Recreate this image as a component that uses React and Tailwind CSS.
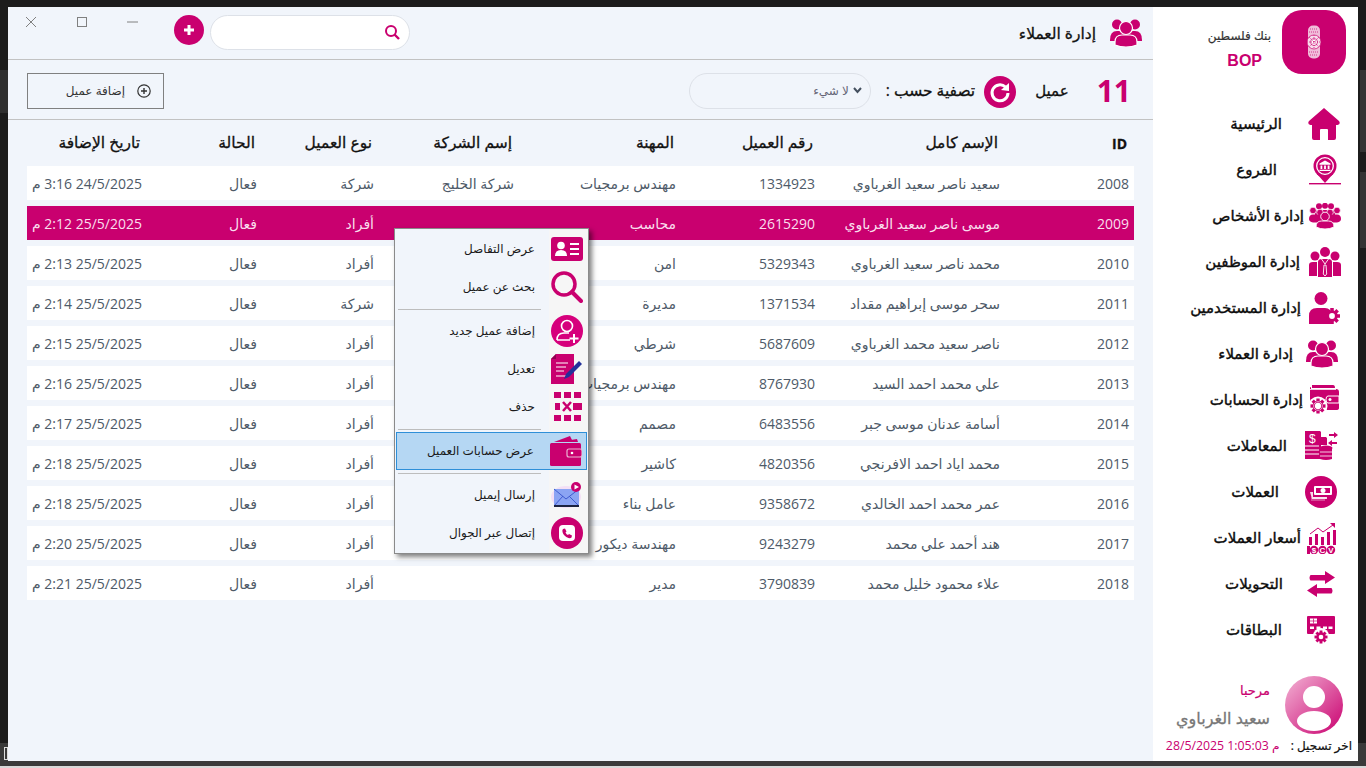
import React from "react";

const P = "#c9006f";

const Gear = ({ cx, cy, r, fill = P, hole = "#fff", holeR = 0.36 }) => (
  <g>
    <circle cx={cx} cy={cy} r={r + 1.2} fill="none" stroke="#fff" strokeWidth="2.4" />
    <circle cx={cx} cy={cy} r={r * 0.72} fill={fill} />
    {[0, 45, 90, 135].map((a) => (
      <rect key={a} x={cx - r * 0.22} y={cy - r} width={r * 0.44} height={r * 2} fill={fill} transform={`rotate(${a} ${cx} ${cy})`} />
    ))}
    <circle cx={cx} cy={cy} r={r * holeR} fill={hole} />
  </g>
);

const Home = () => (
  <svg width="32" height="32" viewBox="0 0 32 32" fill={P}>
    <path d="M16 0 L31 13 q2 3 -1.500 4 H28 V30 q0 2 -2 2 H20 V22 q0-1 -1-1 h-6 q-1 0 -1 1 V32 H6 q-2 0 -2-2 V17 H2.500 Q-1 16 1 13 Z" />
  </svg>
);
const Branch = () => (
  <svg width="32" height="32" viewBox="0 0 32 32" fill={P}>
    <circle cx="16" cy="12" r="11.500" />
    <path d="M8 20 L16 29 L24 20 Z" />
    <circle cx="16" cy="12" r="8.300" fill="none" stroke="#fff" strokeWidth="1.300" />
    <path d="M16 6.500 L21.500 9.500 V10.700 H10.500 V9.500 Z M11.500 11.500 h1.800 v3.500 h-1.800z M15.100 11.500 h1.800 v3.500 h-1.800z M18.700 11.500 h1.800 v3.500 h-1.800z M10.500 15.700 h11 v1.300 h-11z" fill="#fff" />
    <rect x="0" y="29" width="32" height="1.400" />
  </svg>
);
const Persons = () => (
  <svg width="32" height="26" viewBox="0 0 32 26" fill={P}>
    {[[10, 3.200], [16, 2.800], [22, 3.200]].map(([x, y]) => (
      <circle key={x} cx={x} cy={y} r="3" />
    ))}
    <path d="M6 10 q0-3 4-3 h12 q4 0 4 3 v3 H6z" />
    {[[4, 7.500], [28, 7.500], [11, 9.500], [21, 9.500]].map(([x, y]) => (
      <circle key={x} cx={x} cy={y} r="3.300" stroke="#fff" strokeWidth=".7" />
    ))}
    <path d="M0 16 q0-4.500 4-4.500 h24 q4 0 4 4.500 q0 2.500 -4 3.500 H4 q-4 -1 -4 -3.500z" />
    <circle cx="16" cy="13.500" r="4.300" stroke="#fff" strokeWidth=".9" />
    <path d="M7 24 q0-6 5.500-6 h7 q5.500 0 5.500 6 q-4 2 -9 2 q-5 0 -9 -2z" stroke="#fff" strokeWidth=".9" />
  </svg>
);
const Staff = () => (
  <svg width="32" height="30" viewBox="0 0 32 30" fill={P}>
    <circle cx="6" cy="9" r="4.500" />
    <circle cx="26" cy="9" r="4.500" />
    <circle cx="16" cy="5" r="5" />
    <path d="M0 29 V18 q0-3 4-3 h4 V29 Z M24 15 h4 q4 0 4 3 V29 H24 Z" />
    <path d="M9 30 V15 q0-3 4-3 h6 q4 0 4 3 V30 Z" />
    <path d="M12.500 12 L16 17 L19.500 12 M15 18 h2 l.7 9 l-1.700 2 l-1.700 -2 z" fill="none" stroke="#fff" strokeWidth=".9" />
  </svg>
);
const UserGear = () => (
  <svg width="32" height="32" viewBox="0 0 32 32" fill={P}>
    <circle cx="12" cy="6.500" r="6.500" />
    <path d="M0 32 V24 q0-8 8-8 h8 q3 0 5 2 L22 32 Z" />
    <Gear cx="23" cy="24" r="8" />
  </svg>
);
const Clients = ({ w = 32 }) => (
  <svg width={w} height={(w * 28) / 32} viewBox="0 0 32 28" fill={P}>
    <circle cx="7" cy="5.500" r="5" />
    <circle cx="25" cy="5.500" r="5" />
    <path d="M0 21 q0-9 7-9 h18 q7 0 7 9 v1 H0z" />
    <circle cx="16" cy="9" r="6.500" stroke="#fff" strokeWidth="1.200" />
    <path d="M5 26 V23 q0-7 7-7 h8 q7 0 7 7 v3 q-5 2 -11 2 q-6 0 -11-2z" stroke="#fff" strokeWidth="1.200" />
  </svg>
);
const WalletGear = () => (
  <svg width="30" height="30" viewBox="0 0 30 30" fill={P}>
    <path d="M3 0 H24 q2 0 2 3 H3 z" />
    <path d="M1 3 q0 -1 1 -1 v2 h25 q3 0 3 3 V23 q0 2 -3 2 H1 Z" />
    <path d="M1 4.500 H27" stroke="#fff" strokeWidth=".8" />
    <path d="M19 11 h11 v7 h-11 q-2 0 -2-3.500 q0-3.500 2-3.500z" stroke="#fff" strokeWidth="1" />
    <circle cx="21" cy="14.500" r="1.500" fill="#fff" />
    <circle cx="9" cy="21" r="9.500" fill="#fff" />
    <Gear cx="9" cy="21" r="7.500" holeR={0.42} />
    <circle cx="9" cy="21" r="4.400" fill="none" stroke="#fff" strokeWidth=".6" />
  </svg>
);
const Trans = () => (
  <svg width="33" height="30" viewBox="0 0 33 30" fill={P}>
    <path d="M0 0 H15 L22 7 V14 H16 V28 H0 Z" />
    <path d="M16 0 l6 6 h-6z" fill="#fff" />
    <path d="M0 15 H14 M0 19 H14 M0 23 H14" stroke="#fff" />
    <ellipse cx="21" cy="17" rx="6.500" ry="2.500" />
    <path d="M15 28 V18 h12 v10 q-6 2 -12 0z" fill={P} />
    <path d="M15 21 h12 M15 25 h12" stroke="#fff" strokeWidth=".8" />
    <path d="M24 3 h5 v-2 l4 3 l-4 3 v-2 h-5z M32 11 h-5 v-2 l-4 3 l4 3 v-2 h5z" />
    <text x="4" y="12" fill="#fff" fontSize="12" fontFamily="Liberation Sans, sans-serif">$</text>
  </svg>
);
const Curr = () => (
  <svg width="32" height="32" viewBox="0 0 32 32" fill={P}>
    <circle cx="16" cy="16" r="16" />
    <rect x="9" y="10" width="18" height="9" rx="1" fill="#fff" />
    <rect x="11" y="12" width="14" height="5" fill={P} />
    <circle cx="18" cy="14.500" r="2.500" fill="#fff" />
    <path d="M5 16 h3 v5 h14 v2 H7 z" fill="#fff" opacity=".85" />
    <path d="M6 22 h15 M6 24 h14" stroke="#fff" strokeWidth=".8" opacity=".7" />
  </svg>
);
const Rates = () => (
  <svg width="31" height="31" viewBox="0 0 31 31" fill={P}>
    <path d="M3 11 L11 5 L16 9 L26 2" fill="none" stroke={P} strokeWidth="1" />
    <path d="M23 0 h5 v5z" />
    <rect x="2" y="14" width="3" height="8" />
    <rect x="8" y="11" width="3" height="11" />
    <rect x="14" y="14" width="3" height="8" />
    <rect x="20" y="9" width="3" height="13" />
    <rect x="26" y="7" width="3" height="15" />
    <rect x="0" y="23" width="3" height="8" />
    <circle cx="7" cy="27" r="4.200" />
    <circle cx="15.500" cy="27" r="4.200" />
    <circle cx="24" cy="27" r="4.200" />
    <text x="7" y="30" textAnchor="middle" fill="#fff" fontSize="8" fontWeight="700" fontFamily="Liberation Sans, sans-serif">$</text>
    <text x="15.500" y="30" textAnchor="middle" fill="#fff" fontSize="8" fontWeight="700" fontFamily="Liberation Sans, sans-serif">C</text>
    <text x="24" y="30" textAnchor="middle" fill="#fff" fontSize="8" fontWeight="700" fontFamily="Liberation Sans, sans-serif">V</text>
  </svg>
);
const Transfers = () => (
  <svg width="28" height="26" viewBox="0 0 28 26" fill={P}>
    <path d="M3.500 4 H18 V0 L28 6.500 L18 13 V9.500 H3.500 q-2 -2.750 0 -5.500 Z" />
    <path d="M24.500 17 H10 V13 L0 19.500 L10 26 V22.500 H24.500 q2 -2.750 0 -5.500 Z" />
  </svg>
);
const Cards = () => (
  <svg width="28" height="28" viewBox="0 0 28 28" fill={P}>
    <rect x="0" y="0" width="28" height="18" rx="1" />
    <rect x="3" y="2.500" width="7" height="5" fill="#fff" />
    <path d="M6.500 2.500 v5 M3 5 h7" stroke={P} strokeWidth=".7" />
    {[3, 9.500, 16, 21.500].map((x) => (
      <rect key={x} x={x} y="10.500" width="4" height="2.500" fill="#fff" />
    ))}
    <circle cx="14" cy="20" r="8" fill="#fff" />
    <Gear cx="14" cy="21" r="6.500" />
  </svg>
);

const Logo = () => (
  <svg width="16" height="34" viewBox="0 0 16 34" fill="none" stroke="#c9006f" strokeWidth=".7">
    <rect x="2" y="0.500" width="12" height="33" rx="5" fill="#f0bcd9" stroke="none" />
    <path d="M4 4 h8 M3 7 h10 M3 27 h10 M4 30 h8" strokeDasharray="1 1" />
    <circle cx="8" cy="17" r="7" fill="#f8dcec" />
    <circle cx="8" cy="17" r="3.500" fill="#fff" />
    <path d="M8 10 v14 M1 17 h14 M3 12 l10 10 M13 12 l-10 10" strokeDasharray="1 1" />
  </svg>
);

const NAV = [
  ["الرئيسية", Home, "ml-[4px]", "mr-[22px]"],
  ["الفروع", Branch, "ml-[5px]", "mr-[27px]"],
  ["إدارة الأشخاص", Persons, "ml-[5px]", "mr-[0px]"],
  ["إدارة الموظفين", Staff, "ml-[5px]", "mr-[4px]"],
  ["إدارة المستخدمين", UserGear, "ml-[5px]", "mr-[3px]"],
  ["إدارة العملاء", Clients, "ml-[2px]", "mr-[11px]"],
  ["إدارة الحسابات", WalletGear, "ml-[5px]", "mr-[1px]"],
  ["المعاملات", Trans, "ml-[1px]", "mr-[17px]"],
  ["العملات", Curr, "ml-[1px]", "mr-[25px]"],
  ["أسعار العملات", Rates, "ml-[3px]", "mr-[3px]"],
  ["التحويلات", Transfers, "ml-[3px]", "mr-[21px]"],
  ["البطاقات", Cards, "ml-[3px]", "mr-[22px]"],
];

const ROWS = [
  ["2008", "سعيد ناصر سعيد الغرباوي", "1334923", "مهندس برمجيات", "شركة الخليج", "شركة", "24/5/2025 3:16 م"],
  ["2009", "موسى ناصر سعيد الغرباوي", "2615290", "محاسب", "", "أفراد", "25/5/2025 2:12 م"],
  ["2010", "محمد ناصر سعيد الغرباوي", "5329343", "امن", "", "أفراد", "25/5/2025 2:13 م"],
  ["2011", "سحر موسى إبراهيم مقداد", "1371534", "مديرة", "", "شركة", "25/5/2025 2:14 م"],
  ["2012", "ناصر سعيد محمد الغرباوي", "5687609", "شرطي", "", "أفراد", "25/5/2025 2:15 م"],
  ["2013", "علي محمد احمد السيد", "8767930", "مهندس برمجيات", "", "أفراد", "25/5/2025 2:16 م"],
  ["2014", "أسامة عدنان موسى جبر", "6483556", "مصمم", "", "أفراد", "25/5/2025 2:17 م"],
  ["2015", "محمد اياد احمد الافرنجي", "4820356", "كاشير", "", "أفراد", "25/5/2025 2:18 م"],
  ["2016", "عمر محمد احمد الخالدي", "9358672", "عامل بناء", "", "أفراد", "25/5/2025 2:18 م"],
  ["2017", "هند أحمد علي محمد", "9243279", "مهندسة ديكور", "", "أفراد", "25/5/2025 2:20 م"],
  ["2018", "علاء محمود خليل محمد", "3790839", "مدير", "", "أفراد", "25/5/2025 2:21 م"],
];

const GRID = "grid grid-cols-[129px_185px_139px_162px_140px_117px_115px_120px]";

const Menu = () => {
  const Row = ({ label, icon, active }) => (
    <div className={`flex h-[38px] items-center justify-end ${active ? "border border-[#2e8fd8] bg-[#b5d7f3]" : ""}`}>
      <span className="mr-[12px] text-[12px] text-[#1a1a1a]">{label}</span>
      <div className="flex w-[40px] shrink-0 items-center justify-center">{icon}</div>
    </div>
  );
  const Sep = () => (
    <div className="flex h-[6px] items-center pl-[2px] pr-[46px]">
      <div className="h-px w-full bg-[#bdbdbd]" />
    </div>
  );
  return (
    <div dir="ltr" className="absolute left-[394px] top-[228px] z-10 w-[195px] border border-[#8a8a8a] bg-[linear-gradient(to_right,#f1f5fb_154px,#f6f6f6_154px)] px-px py-px shadow-[3px_3px_5px_rgba(0,0,0,0.5)]">
      <Row label="عرض التفاصل" icon={
        <svg width="32" height="24" viewBox="0 0 32 24"><rect width="32" height="24" rx="3" fill={P} /><circle cx="10" cy="8.500" r="3.800" fill="#fff" /><path d="M4 19 q0-6 6-6 q6 0 6 6z" fill="#fff" /><path d="M19 7 h9 M19 12 h9 M19 17 h9" stroke="#fff" strokeWidth="2" /></svg>
      } />
      <Row label="بحث عن عميل" icon={
        <svg width="32" height="32" viewBox="0 0 32 32" fill="none" stroke={P}><circle cx="13" cy="13" r="11" strokeWidth="3.500" /><path d="M21 21 L30 30" strokeWidth="4" strokeLinecap="round" /></svg>
      } />
      <Sep />
      <Row label="إضافة عميل جديد" icon={
        <svg width="32" height="32" viewBox="0 0 32 32"><circle cx="16" cy="16" r="16" fill="#d6007c" /><circle cx="16" cy="11" r="5.500" fill="none" stroke="#fff" strokeWidth="1.600" /><path d="M6 25 q0-7 7-7 h5 M6 25 h13" fill="none" stroke="#fff" strokeWidth="1.600" /><path d="M23 19 v9 M18.500 23.500 h9" stroke="#fff" strokeWidth="2" /></svg>
      } />
      <Row label="تعديل" icon={
        <svg width="32" height="30" viewBox="0 0 32 30"><path d="M5 0 H23 V30 H0 V5 Z" fill={P} /><path d="M5 0 V5 H0" fill="#8f004f" /><path d="M5 9 H17 M5 13 H15 M5 17 H13 M5 22 H17" stroke="#fff" strokeWidth="1.200" /><path d="M28 7 L31 10 L18 23 L13 25 L15 20 Z" fill="#23309a" /></svg>
      } />
      <Row label="حذف" icon={
        <svg width="30" height="30" viewBox="0 0 30 30" fill={P}>
          {[2, 12, 22].map((x) => <rect key={x} x={x} y="0" width="7" height="6" />)}
          {[2, 12, 22].map((x) => <rect key={x} x={x} y="23" width="7" height="6" />)}
          <rect x="3" y="11" width="5" height="7" />
          <rect x="21" y="11" width="9" height="7" />
          <path d="M11 10 L19 19 M19 10 L11 19" stroke={P} strokeWidth="2.500" />
        </svg>
      } />
      <Sep />
      <Row active label="عرض حسابات العميل" icon={
        <svg width="32" height="30" viewBox="0 0 32 30" fill={P}><path d="M4 6 L20 0 L23 6 Z" /><path d="M8 6 L27 3 L28 6Z" /><rect x="0" y="7" width="31" height="23" rx="1.500" /><rect x="17" y="13" width="15" height="8" rx="2" stroke="#e9b3d2" strokeWidth="1.200" /><circle cx="22" cy="17" r="1.300" fill="#fff" /></svg>
      } />
      <Sep />
      <Row label="إرسال إيميل" icon={
        <svg width="32" height="30" viewBox="0 0 32 30"><ellipse cx="15" cy="17" rx="15" ry="11" fill="#f3dff5" /><rect x="3" y="9" width="25" height="17" fill="#8ba4f3" /><path d="M3 9 L15 19 L28 9 M3 26 L12 16 M28 26 L18 16" fill="none" stroke="#3f5bd0" strokeWidth="1" /><rect x="3" y="25" width="25" height="2" fill="#1c2340" /><circle cx="25" cy="7" r="5" fill="#c9006f" /><path d="M23.500 4.500 L28 7 L23.500 9.500Z" fill="#fff" /></svg>
      } />
      <Row label="إتصال عبر الجوال" icon={
        <svg width="32" height="32" viewBox="0 0 32 32"><circle cx="16" cy="16" r="16" fill={P} /><rect x="8" y="8" width="16" height="16" rx="4" fill="#fff" /><path d="M12 12 l2-.5 l1.500 3 l-1 1 q1 2 2.500 2.500 l1-1 l3 1.500 l-.5 2 q-1 1 -3 .5 q-5-2 -6-6 q-.5-2 .5-3z" fill={P} /></svg>
      } />
    </div>
  );
};

export default function App() {
  return (
    <div dir="ltr" className="relative h-[768px] w-[1366px] overflow-hidden bg-[#1c1c1c] font-['Open_Sans','DejaVu_Sans',sans-serif]">
      <div className="absolute left-0 top-[70px] h-[43px] w-[8px] bg-[#2f2f2f]" />
      <div className="absolute right-0 top-[70px] h-[82px] w-[6px] bg-[#343434]" />
      <div className="absolute right-0 top-[172px] h-[76px] w-[6px] bg-[#343434]" />
      <div className="absolute bottom-0 left-0 h-[25px] w-full bg-[#3a3a3a]" />
      <div className="absolute bottom-0 left-0 h-[2px] w-full bg-[#d8d8d8]" />
      <div className="absolute bottom-[8px] left-[4px] h-[13px] w-[4px] border border-[#ddd]" />

      <div className="absolute left-[8px] top-[7px] flex h-[754px] w-[1350px]">
        {/* main */}
        <div className="relative flex min-w-0 flex-1 flex-col bg-[#f1f5fb]">
          <header className="flex h-[53px] items-center justify-between border-b border-[#c2c2c2]">
            <div className="flex items-center">
              <div className="flex w-[130px] -translate-y-[11px] items-center justify-between pl-[17px]">
                <svg width="12" height="12" viewBox="0 0 12 12" stroke="#808080" strokeWidth="1"><path d="M1 1 L11 11 M11 1 L1 11" /></svg>
                <svg width="10" height="10" viewBox="0 0 10 10" fill="none" stroke="#808080" strokeWidth="1"><rect x=".5" y=".5" width="9" height="9" /></svg>
                <svg width="11" height="10" viewBox="0 0 11 10" stroke="#808080" strokeWidth="1"><path d="M0 5 H11" /></svg>
              </div>
              <div className="ml-[36px] flex h-[30px] w-[30px] -translate-y-[3px] items-center justify-center rounded-full bg-[#c9006f]">
                <svg width="12" height="12" viewBox="0 0 12 12" stroke="#fff" strokeWidth="3"><path d="M6 1 V11 M1 6 H11" /></svg>
              </div>
              <div className="ml-[6px] flex h-[35px] w-[200px] -translate-y-px items-center justify-end rounded-[18px] border border-[#dde1e8] bg-white pr-[9px]">
                <svg width="16" height="16" viewBox="0 0 16 16" fill="none" stroke={P} strokeWidth="2"><circle cx="7" cy="7" r="5" /><path d="M10.500 10.500 L15 15" strokeWidth="2.400" /></svg>
              </div>
            </div>
            <div className="flex items-center pr-[11px]">
              <span dir="rtl" className="mt-[2px] text-[15.5px] text-[#111] [-webkit-text-stroke:0.3px]">إدارة العملاء</span>
              <div className="ml-[14px]"><Clients /></div>
            </div>
          </header>

          <div className="flex h-[60px] items-center justify-between border-b border-[#c2c2c2] pt-[2px]">
            <div className="ml-[19px] flex h-[36px] w-[137px] items-center justify-end border border-[#808080] pr-[12px]">
              <span dir="rtl" className="text-[12px] text-[#333]">إضافة عميل</span>
              <svg className="ml-[12px]" width="14" height="14" viewBox="0 0 14 14" fill="none" stroke="#333" strokeWidth="1.200"><circle cx="7" cy="7" r="6.200" /><path d="M7 4 V10 M4 7 H10" strokeWidth="1.400" /></svg>
            </div>
            <div className="flex items-center pr-[22px]">
              <div className="flex h-[36px] w-[182px] items-center justify-end rounded-[18px] border border-[#dde1e8] pr-[8px]">
                <span dir="rtl" className="text-[12px] text-[#667]">لا شيء</span>
                <svg className="ml-[4px]" width="9" height="7" viewBox="0 0 9 7" fill="none" stroke="#44505f" strokeWidth="2"><path d="M1 1 L4.500 5 L8 1" /></svg>
              </div>
              <span dir="rtl" className="ml-[15px] text-[15.5px] text-[#111] [-webkit-text-stroke:0.3px]">تصفية حسب :</span>
              <svg className="ml-[9px] mt-[3px]" width="32" height="32" viewBox="0 0 32 32"><circle cx="16" cy="16" r="16" fill={P} /><path d="M21.500 11 A8 8 0 1 0 24 17" fill="none" stroke="#fff" strokeWidth="3" /><path d="M25 7 L25 15 L17 14 Z" fill="#fff" /></svg>
              <span dir="rtl" className="ml-[19px] text-[15px] text-[#111] [-webkit-text-stroke:0.3px]">عميل</span>
              <span className="ml-[28px] text-[30px] font-bold leading-none text-[#c9006f]">11</span>
            </div>
          </div>

          <div dir="rtl" className="pl-[19px] pr-[19px]">
            <div className={`${GRID} h-[46px] items-center text-[15.5px] text-[#111] [-webkit-text-stroke:0.3px]`}>
              {["ID", "الإسم كامل", "رقم العميل", "المهنة", "إسم الشركة", "نوع العميل", "الحالة", "تاريخ الإضافة"].map((h) => (
                <div key={h} className={h === "ID" ? "pr-[7px] text-[14px] font-bold" : "pr-[7px]"}>{h}</div>
              ))}
            </div>
            <div className="flex flex-col gap-[6px]">
              {ROWS.map((r, i) => (
                <div key={r[0]} className={`${GRID} h-[34px] items-center text-[14px] ${i === 1 ? "bg-[#c9006f] text-[#f9dfed]" : "bg-white text-[#4e5a68]"}`}>
                  <div className="pr-[5px]">{r[0]}</div>
                  <div className="pr-[5px]">{r[1]}</div>
                  <div className="pr-[5px]">{r[2]}</div>
                  <div className="whitespace-nowrap pr-[5px]">{r[3]}</div>
                  <div className="pr-[5px]">{r[4]}</div>
                  <div className="pr-[5px]">{r[5]}</div>
                  <div className="pr-[5px]">فعال</div>
                  <div className="whitespace-nowrap pr-[5px]">{r[6]}</div>
                </div>
              ))}
            </div>
          </div>
        </div>

        {/* sidebar */}
        <aside className="flex w-[205px] shrink-0 flex-col bg-white">
          <div className="mt-[3px] flex h-[64px] justify-end pr-[12px]">
            <div dir="rtl" className="mr-[11px] flex flex-col items-start pt-[15px]">
              <span className="text-[12px] leading-[22px] text-[#333] [-webkit-text-stroke:0.2px]">بنك فلسطين</span>
              <span className="mr-[9px] mt-[4px] font-['Liberation_Sans',sans-serif] text-[16px] font-bold leading-[20px] text-[#c9006f]">BOP</span>
            </div>
            <div className="flex h-[64px] w-[64px] items-center justify-center rounded-[20px] bg-[#c9006f]"><Logo /></div>
          </div>
          <nav className="mt-[27px] flex flex-col">
            {NAV.map(([label, Icon, iconCls, textCls]) => (
              <div key={label} className="flex h-[46px] items-center justify-end pr-[14px]">
                <span dir="rtl" className={`-mt-px whitespace-nowrap text-[15px] text-[#0c0c0c] [-webkit-text-stroke:0.4px] ${textCls}`}>{label}</span>
                <div className="flex w-[40px] shrink-0 items-center">
                  <div className={`flex ${iconCls}`}><Icon /></div>
                </div>
              </div>
            ))}
          </nav>
          <div className="mt-auto flex flex-col pb-[6px]">
            <div className="flex items-center justify-end pr-[15px]">
              <div dir="rtl" className="mr-[15px] flex flex-col items-start">
                <span className="text-[13px] leading-[20px] text-[#c9006f] [-webkit-text-stroke:0.2px]">مرحبا</span>
                <span className="mt-[6px] text-[16px] leading-[24px] text-[#777] [-webkit-text-stroke:0.3px]">سعيد الغرباوي</span>
              </div>
              <div className="flex h-[58px] w-[58px] items-center justify-center overflow-hidden rounded-full bg-[linear-gradient(135deg,#f3b4d5,#c9006f)]">
                <svg width="58" height="58" viewBox="0 0 58 58" fill="#fff"><circle cx="29" cy="21" r="11" /><ellipse cx="29" cy="45" rx="17" ry="10" /></svg>
              </div>
            </div>
            <div className="mt-[3px] flex items-center justify-end pr-[6px]">
              <span className="whitespace-nowrap text-[12.3px] text-[#c9006f]">28/5/2025 1:05:03 م</span>
              <span dir="rtl" className="ml-[11px] whitespace-nowrap text-[12px] text-[#111] [-webkit-text-stroke:0.2px]">اخر تسجيل :</span>
            </div>
          </div>
        </aside>
      </div>
      <Menu />
    </div>
  );
}
